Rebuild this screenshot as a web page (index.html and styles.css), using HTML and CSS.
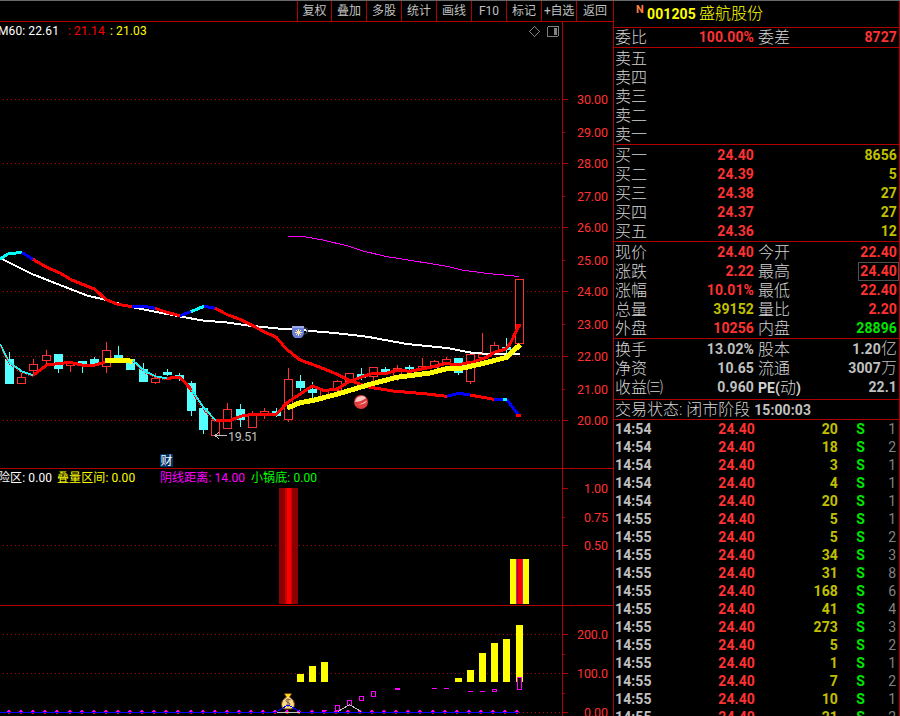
FILE: index.html
```html
<!DOCTYPE html>
<html lang="zh-CN">
<head>
    <meta charset="UTF-8">
    <title>001205 盛航股份</title>
    <link rel="stylesheet" href="styles.css">
</head>
<body>
<div class="app">
    <main class="charts">
        <nav class="toolbar">
            <span>复权</span><span>叠加</span><span>多股</span><span>统计</span><span>画线</span><span>F10</span><span>标记</span><span class="wide">+自选</span><span>返回</span>
        </nav>

        <section class="pane pane-main">
            <svg id="main" width="613" height="446" viewBox="0 22 613 446">
                <g class="grid" id="mainGrid"></g>
                <g id="candles"></g>
                <g class="line">
                    <polyline class="white" points="0,258 4,260 32,274 60,285 87,295.5 106,300 130,306.7 155,311.7 180,316.5 203,320.5 227,322.5 248,325.5 280,328.7 288,329 335,333 367,336.7 407,344 447,348 473,353 490,354 520,354"/>
                    <polyline class="magenta" points="288,236.5 303,236.5 323,240 348,246 362,250.7 385,256.3 410,260.3 447,266.3 463,270.3 490,273.7 519,276.5"/>
                </g>
                <g class="line thick">
                    <polyline class="cyan" points="0,259 8.5,253.7 22,252.5"/>
                    <polyline class="blue" points="22,252.5 33,259.3"/>
                    <polyline class="red" points="33,259.3 46.7,267.3 60,273 71.7,280 95,289.3 106,299.7 118,304.3 131.7,306.7"/>
                    <polyline class="blue" points="131.7,306.7 145,306.5 155,308.3"/>
                    <polyline class="red" points="155,308.3 166.7,312.3 180,315.7"/>
                    <polyline class="blue" points="180,315.7 190.7,311.7"/>
                    <polyline class="cyan" points="190.7,311.7 204,306.3"/>
                    <polyline class="blue" points="204,306.3 215,308.3"/>
                    <polyline class="red" points="215,308.3 228,315 240,319.3 253.3,326 265,332.3 276,337 286.7,349.3 300,360 315,365.3 336.7,374 350,380.7 370,387.3 393.3,391 426.7,394 446.7,396.3"/>
                    <polyline class="blue" points="446.7,396.3 459,393.3 470,395"/>
                    <polyline class="red" points="470,395 494,399.3"/>
                    <polyline class="blue" points="494,399.5 504,399.5 507,400 518,414.3"/>
                    <polyline class="cyan" points="503,399.5 507,399.5"/>
                    <polyline class="red" points="515.5,415.5 520.5,415.5"/>
                </g>
                <g class="line thick">
                    <polyline class="cyan mid" points="0,344 9.3,362.3 21.7,371.3 33.3,375.3"/>
                    <polyline class="red" points="33.3,375.3 46.7,365 58,363.7 70,362.3 82,365 93,365.7 105,362"/>
                    <polyline class="cyan mid" points="133,360.7 145,371.3 156.7,376.7 166.7,378.3"/>
                    <polyline class="red" points="166.7,378.3 180,377.3 191.7,390"/>
                    <polyline class="cyan mid" points="191.7,390 204,408 215.7,420.5"/>
                    <polyline class="red dots" points="0,346 9.3,364 21.7,373 33,376.5"/>
                    <polyline class="red dots" points="133,362.5 145,373 156.7,378 166.7,380"/>
                    <polyline class="red dots" points="190.7,391 202.5,409 215,421.5"/>
                    <polyline class="red" points="215.7,420.5 230,420.5 240.7,416.3 251.7,414.3 276,414.3 288,402 312.3,386 324.3,390.7 336.7,389 350,381.3 361.7,377 371.7,373.7 386.7,373.3 398,370 410,371.3 433,366.7 446,363.3 456.7,365 473,362 486.7,357.3 495,352 505,349.3 510,344 519,325.7"/>
                    <polyline class="red" points="515.5,325.5 520.5,325.5"/>
                    <polyline class="yellow" points="105,360.5 120,360 132.5,361.3"/>
                    <polyline class="yellow" points="287.3,408 300,402.7 313.3,400.3 336.7,394.3 370,384.3 396.7,377.3 430,373 446.7,368.7 461.7,368.3 483.3,363.3 506.7,357.3 520,344.7"/>
                </g>
                <!-- lowest price marker -->
                <path class="arrow" d="M227 435.500H215M219 432l-4 3.500 4 3.500"/>
                <text class="low" x="228" y="441" textLength="30">19.51</text>
                <!-- cup -->
                <g class="icon">
                    <path d="M304 328q4 0 3.500 3t-4.500 3" fill="none" stroke="#2c3a5c" stroke-width="1.500"/>
                    <path d="M292 326h12v6q0 4-3 6h-6q-3-2-3-6z" fill="#6a7fd8"/>
                    <path d="M292 326h12v2h-12z" fill="#9aa9ea"/>
                    <path d="M298.500 329v7M295 332.500h7M296 330l5 5M301 330l-5 5" stroke="#ffe9a0"/>
                </g>
                <!-- ball -->
                <g class="icon">
                    <circle cx="361" cy="402" r="7" fill="#e23b3b"/>
                    <path d="M355 402q1-6 7-6 3 0 4 2-5 4-11 4zM358 404.500q5-1 9-4-1 4-9 4z" fill="#f8c4c4"/>
                </g>
                <!-- finance badge -->
                <rect x="160" y="454" width="13" height="13" fill="#003366"/>
                <text class="badge" x="160.500" y="465">财</text>
                <!-- panel switches -->
                <path class="ctl" d="M534.500 26.500l5 5-5 5-5-5z"/>
                <rect class="ctl" x="547.500" y="26.500" width="11" height="10" rx="1.500"/>
                <rect x="554" y="28" width="3" height="7" fill="#808080"/>
            </svg>
            <div class="legend">
                <span class="t-white">M60: 22.61</span>
                <span class="t-red">: 21.14</span>
                <span class="t-yellow">: 21.03</span>
            </div>
        </section>

        <section class="pane pane-signal">
            <svg width="613" height="136" viewBox="0 469 613 136">
                <g class="grid" id="signalGrid"></g>
                <rect x="279" y="488" width="19" height="116" fill="#8b0000"/>
                <rect x="285" y="488" width="7" height="116" fill="#c80000"/>
                <rect x="287" y="488" width="4" height="116" fill="#ff0000"/>
                <rect x="510" y="559" width="19" height="45" fill="#ffff00"/>
                <rect x="516" y="559" width="7" height="45" fill="#a828a8"/>
                <rect x="517" y="559" width="5" height="45" fill="#c80000"/>
                <rect x="518" y="559" width="4" height="45" fill="#ff0000"/>
            </svg>
            <div class="legend legend-signal">
                <span class="t-white">险区: 0.00</span>
                <span class="t-yellow">叠量区间: 0.00</span>
                <span class="t-magenta">阴线距离: 14.00</span>
                <span class="t-green">小锅底: 0.00</span>
            </div>
        </section>

        <section class="pane pane-volume">
            <svg width="613" height="110" viewBox="0 606 613 110">
                <g class="grid" id="volumeGrid"></g>
                <g id="bars" fill="#ffff00"></g>
                <rect x="518" y="678" width="4" height="5" fill="#000"/>
                <g class="boxes">
                    <rect x="335.500" y="705.500" width="4" height="5"/>
                    <rect x="347.500" y="700.500" width="4" height="5"/>
                    <rect x="359.500" y="696.500" width="4" height="4"/>
                    <rect x="371.500" y="691.500" width="4" height="5"/>
                    <rect x="492.500" y="689.500" width="4" height="2"/>
                    <rect x="517.500" y="677.500" width="4" height="12"/>
                    <path d="M322 710.500h5M395 688.500h5M395 689.500h5M432 688.500h5M444 688.500h5M468 691.500h5M480 691.500h5"/>
                </g>
                <!-- money bag -->
                <g class="icon">
                    <path d="M284.500 693.500h7l-2 3.500q5 3 5 7 0 5-4 5h-5q-4 0-4-5 0-4 5-7z" fill="#f6dc82" stroke="#6b4020"/>
                    <path d="M285 694h6l-2 3h-2z" fill="#ffe000"/>
                    <path d="M290.500 700q-4-2-4.500.5 0 1.500 2 2t2 2q-1 2-4 .5M288 699v8" fill="none" stroke="#7a4a4a"/>
                </g>
                <g id="dots"></g>
                <rect x="0" y="712" width="519" height="1" fill="#0000ff"/>
                <rect x="277" y="712" width="23" height="1" fill="#c0c0c0"/>
                <path d="M277 711.500l11-6.500 12 6.500" fill="none" stroke="#0000ff"/>
                <path d="M338 711.500l11.500-7 11.500 7" fill="none" stroke="#c0c0c0"/>
            </svg>
        </section>
    </main>

    <aside class="quote">
        <header class="title"><sup>N</sup><b>001205</b><span>盛航股份</span></header>
        <section class="block single">
            <div class="row"><label>委比</label><b class="r">100.00%</b><label>委差</label><b class="r">8727</b></div>
        </section>
        <section class="block">
            <div class="row"><label>卖五</label></div>
            <div class="row"><label>卖四</label></div>
            <div class="row"><label>卖三</label></div>
            <div class="row"><label>卖二</label></div>
            <div class="row"><label>卖一</label></div>
        </section>
        <section class="block">
            <div class="row"><label>买一</label><b class="r">24.40</b><i></i><b class="y">8656</b></div>
            <div class="row"><label>买二</label><b class="r">24.39</b><i></i><b class="y">5</b></div>
            <div class="row"><label>买三</label><b class="r">24.38</b><i></i><b class="y">27</b></div>
            <div class="row"><label>买四</label><b class="r">24.37</b><i></i><b class="y">27</b></div>
            <div class="row"><label>买五</label><b class="r">24.36</b><i></i><b class="y">12</b></div>
        </section>
        <section class="block">
            <div class="row"><label>现价</label><b class="r">24.40</b><label>今开</label><b class="r">22.40</b></div>
            <div class="row"><label>涨跌</label><b class="r">2.22</b><label>最高</label><b class="r boxed">24.40</b></div>
            <div class="row"><label>涨幅</label><b class="r">10.01%</b><label>最低</label><b class="r">22.40</b></div>
            <div class="row"><label>总量</label><b class="y">39152</b><label>量比</label><b class="r">2.20</b></div>
            <div class="row"><label>外盘</label><b class="r">10256</b><label>内盘</label><b class="g">28896</b></div>
        </section>
        <section class="block stats">
            <div class="row"><label>换手</label><b>13.02%</b><label>股本</label><b>1.20<em>亿</em></b></div>
            <div class="row"><label>净资</label><b>10.65</b><label>流通</label><b>3007<em>万</em></b></div>
            <div class="row"><label>收益㈢</label><b>0.960</b><label><strong>PE(</strong>动<strong>)</strong></label><b>22.1</b></div>
        </section>
        <div class="status">交易状态: 闭市阶段 <b>15:00:03</b></div>
        <div class="ticks" id="ticks"></div>
    </aside>
</div>

<script>
    const NS = 'http://www.w3.org/2000/svg';

    function add(parent, tag, attrs, text) {
        const el = document.createElementNS(NS, tag);
        for (const k in attrs) el.setAttribute(k, attrs[k]);
        if (text) el.textContent = text;
        parent.appendChild(el);
    }

    // rows: [y, label, dotted, major tick]
    function drawGrid(id, top, rows) {
        const g = document.getElementById(id);
        add(g, 'line', { x1: 562.5, x2: 562.5, y1: top, y2: 720 });
        rows.forEach(([y, label, dotted, major]) => {
            if (dotted) add(g, 'line', { class: 'dotted', x1: 3, x2: 562, y1: y + 0.5, y2: y + 0.5 });
            add(g, 'line', { x1: 563, x2: major ? 568 : 565, y1: y + 0.5, y2: y + 0.5 });
            if (label) add(g, 'text', { x: 608, y: y + 5, textLength: label.length === 4 ? 24 : 31 }, label);
        });
    }

    drawGrid('mainGrid', 22, [99, 132, 163, 196, 227, 260, 291, 324, 356, 389, 420]
        .map((y, i) => [y, (30 - i).toFixed(2), i % 2 === 0, i % 2 === 0]));
    drawGrid('signalGrid', 469, [[488, '1.00', 0, 1], [517, '0.75', 0, 0], [545, '0.50', 1, 1]]);
    drawGrid('volumeGrid', 606, [[634, '200.0', 1, 1], [654, '', 0, 0], [673, '100.0', 1, 1], [693, '', 0, 0], [712, '0.00', 1, 1]]);

    // [x, high, body top, body bottom, low, up]
    const candles = [
        [5, 352, 359, 384, 384, 0], [17, 373, 377, 384, 384, 1], [29, 359, 364, 371, 375, 1],
        [42, 350, 355, 361, 365, 1], [54, 354, 354, 369, 373, 0], [66, 363, 363, 366, 372, 1],
        [78, 361, 361, 365, 373, 0], [90, 357, 359, 365, 367, 0], [102, 342, 350, 367, 373, 1],
        [114, 346, 355, 362, 362, 0], [126, 359, 359, 370, 370, 0], [139, 363, 369, 382, 382, 0],
        [151, 373, 378, 383, 384, 1], [163, 369, 372, 375, 376, 0], [175, 373, 375, 379, 381, 0],
        [187, 381, 383, 411, 416, 0], [199, 408, 408, 430, 434, 0], [211, 420, 420, 436, 436, 1],
        [223, 403, 409, 429, 429, 1], [236, 404, 409, 420, 427, 0], [248, 411, 415, 428, 428, 1],
        [260, 408, 411, 414, 419, 1], [272, 408, 411, 416, 417, 0], [284, 368, 379, 420, 422, 1],
        [296, 375, 381, 388, 391, 0], [308, 382, 389, 393, 398, 0], [320, 390, 390, 398, 398, 1],
        [333, 380, 381, 391, 391, 1], [345, 373, 373, 382, 382, 1], [357, 368, 374, 378, 380, 0],
        [369, 367, 367, 377, 381, 1], [381, 367, 369, 372, 373, 0], [393, 365, 368, 376, 381, 1],
        [405, 365, 367, 369, 370, 0], [418, 358, 366, 370, 370, 1], [430, 360, 361, 368, 368, 1],
        [442, 357, 359, 364, 364, 1], [454, 358, 358, 373, 375, 0], [466, 354, 354, 382, 384, 1],
        [478, 333, 354, 358, 358, 1], [490, 342, 345, 353, 353, 1], [502, 338, 347, 350, 357, 0],
        [515, 279, 279, 344, 344, 1]
    ];
    const cg = document.getElementById('candles');
    candles.forEach(([x, high, top, bottom, low, up]) => {
        const color = up ? '#ff3232' : '#54ffff';
        add(cg, 'rect', { x: x + 4, y: high, width: 1, height: low - high, fill: color });
        if (up) {
            add(cg, 'rect', { x: x + 0.5, y: top + 0.5, width: 8, height: bottom - top - 1, fill: '#000', stroke: color });
        } else {
            add(cg, 'rect', { x: x, y: top, width: 9, height: bottom - top, fill: color });
        }
    });

    const bars = [[297, 674], [309, 666], [321, 662], [455, 678], [467, 670], [479, 653], [491, 643], [503, 639], [516, 625]];
    bars.forEach(([x, y]) => add(document.getElementById('bars'), 'rect', { x: x, y: y, width: 7, height: 682 - y }));

    const dots = document.getElementById('dots');
    for (let i = 0; i < 43; i++) {
        const x = Math.round(8 + i * 12.1);
        add(dots, 'rect', { x: x, y: 710, width: 2, height: 1, fill: '#ff00ff' });
        add(dots, 'rect', { x: x - 1, y: 711, width: 3, height: 1, fill: '#ff00ff' });
        add(dots, 'rect', { x: x + 2, y: 711, width: 1, height: 1, fill: '#ff0000' });
        add(dots, 'rect', { x: x, y: 713, width: 2, height: 1, fill: '#ff0000' });
    }

    const ticks = [
        ['14:54', 20, 1], ['14:54', 18, 2], ['14:54', 3, 1], ['14:54', 4, 1], ['14:54', 20, 1],
        ['14:55', 5, 1], ['14:55', 5, 2], ['14:55', 34, 3], ['14:55', 31, 8], ['14:55', 168, 6],
        ['14:55', 41, 4], ['14:55', 273, 3], ['14:55', 5, 2], ['14:55', 1, 1], ['14:55', 7, 2],
        ['14:55', 10, 1], ['14:55', 21, 2]
    ];
    document.getElementById('ticks').innerHTML = ticks.map(([time, vol, n]) =>
        `<div class="tick"><b>${time}</b><b class="r">24.40</b><b class="y">${vol}</b><b class="g">S</b><span>${n}</span></div>`
    ).join('');
</script>
</body>
</html>
```
FILE: styles.css
```css
* {
    box-sizing: border-box;
}
body {
    margin: 0;
    background: #000;
    color: #c0c0c0;
    font-family: Roboto, "Noto Sans CJK SC", sans-serif;
    overflow: hidden;
}
.app {
    display: grid;
    grid-template-columns: 613px 287px;
    width: 900px;
    height: 716px;
    border-top: 1px solid #696969;
    overflow: hidden;
}

/* left side */
.charts {
    display: flex;
    flex-direction: column;
    min-width: 0;
}
.toolbar {
    display: flex;
    justify-content: flex-end;
    height: 21px;
    flex: none;
    border-bottom: 1px solid #b00000;
    font-size: 12px;
    line-height: 20px;
}
.toolbar span {
    width: 35px;
    border-left: 1px solid #b00000;
    text-align: center;
    white-space: nowrap;
}
.toolbar span:first-child {
    width: 34px;
}
.toolbar span:last-child {
    width: 37px;
}
.toolbar .wide {
    letter-spacing: -0.3px;
}
.pane {
    display: grid;
    flex: none;
    overflow: hidden;
}
.pane > * {
    grid-area: 1 / 1;
}
.pane svg {
    display: block;
    shape-rendering: crispEdges;
}
.pane .icon {
    shape-rendering: geometricPrecision;
}
.pane-main {
    height: 447px;
    border-bottom: 1px solid #b00000;
}
.pane-signal {
    height: 137px;
    border-bottom: 1px solid #b00000;
}
.pane-volume {
    height: 110px;
}
.legend {
    display: flex;
    align-self: start;
    margin-left: -2px;
    font-size: 12px;
    line-height: 18px;
    letter-spacing: 0.1px;
    white-space: pre;
}
.legend span:nth-child(1) {
    width: 70px;
}
.legend span:nth-child(2) {
    width: 42px;
}
.legend-signal span:nth-child(1) {
    width: 59px;
}
.legend-signal span:nth-child(2) {
    width: 103px;
}
.legend-signal span:nth-child(3) {
    width: 91px;
}
.t-white { color: #fff; }
.t-red { color: #ff0000; }
.t-yellow { color: #ffff00; }
.t-magenta { color: #ff00ff; }
.t-green { color: #00ff00; }

.grid line {
    stroke: #b00000;
}
.grid .dotted {
    stroke-dasharray: 1 3;
}
.grid text {
    fill: #ff3232;
    font-size: 12.5px;
    text-anchor: end;
}
.line polyline {
    fill: none;
    stroke-width: 2;
}
.line .magenta {
    stroke: #ff00ff;
    stroke-width: 1;
}
.thick polyline {
    stroke-width: 3;
}
.thick .mid {
    stroke-width: 2;
}
.line .dots {
    stroke-width: 1;
    stroke-dasharray: 1 1;
}
.line .yellow {
    stroke: #ffff00;
    stroke-width: 5;
}
.line .white { stroke: #fff; }
.line .cyan { stroke: #00ffff; }
.line .blue { stroke: #0000ff; }
.line .red { stroke: #ff0000; }
.line .cyan.mid { stroke: #20f0f0; }
.arrow,
.ctl {
    fill: none;
    stroke: #c0c0c0;
}
.ctl {
    stroke: #808080;
}
.low {
    fill: #c0c0c0;
    font-size: 12.5px;
}
.badge {
    fill: #fff;
    font-size: 12px;
}
.boxes {
    fill: none;
    stroke: #ff00ff;
}

/* quote panel */
.quote {
    border-left: 1px solid #b00000;
    border-right: 1px solid #b00000;
    font-size: 16px;
    font-weight: 300;
    line-height: 19px;
    overflow: hidden;
}
.quote label,
.status {
    color: #d4d4d4;
}
.quote b,
.quote strong {
    font-size: 14px;
    font-weight: 700;
    letter-spacing: 0.1px;
}
.title {
    display: flex;
    height: 27px;
    padding-left: 22px;
    line-height: 26px;
    color: #ffff00;
    border-bottom: 1px solid #b00000;
}
.title sup {
    width: 11px;
    color: #ff8040;
    font-size: 11px;
    font-weight: 700;
    line-height: 17px;
}
.title b {
    width: 52px;
}
.block {
    height: 97px;
    padding-top: 1px;
    border-bottom: 1px solid #b00000;
}
.single {
    height: 20px;
    padding-top: 0;
}
.stats {
    height: 61px;
}
.row {
    display: grid;
    grid-template-columns: 48px 90px 48px 95px;
    height: 19px;
    padding-left: 2px;
    white-space: nowrap;
}
.row label {
    margin-left: -1px;
}
.row label:nth-child(3) {
    padding-left: 5px;
}
.row b {
    text-align: right;
}
.row em {
    font-style: normal;
    font-size: 16px;
    font-weight: 300;
    line-height: 1;
}
.row .boxed {
    justify-self: end;
    margin-right: -2px;
    padding: 0 1px;
    line-height: 17px;
    border: 1px solid #505050;
}
.r { color: #ff3232; }
.y { color: #c0c000; }
.g { color: #00e600; }
.status {
    height: 20px;
    padding-left: 1px;
    border-bottom: 1px solid #b00000;
    white-space: nowrap;
}
.status b {
    color: #c0c0c0;
}
.tick {
    display: grid;
    grid-template-columns: 48px 91px 83px 27px 31px;
    height: 18px;
    padding-left: 2px;
    line-height: 18px;
    text-align: right;
}
.tick b:first-child {
    margin-left: -1px;
    text-align: left;
}
.tick span {
    color: #808080;
    font-size: 14px;
    font-weight: 400;
}
```
